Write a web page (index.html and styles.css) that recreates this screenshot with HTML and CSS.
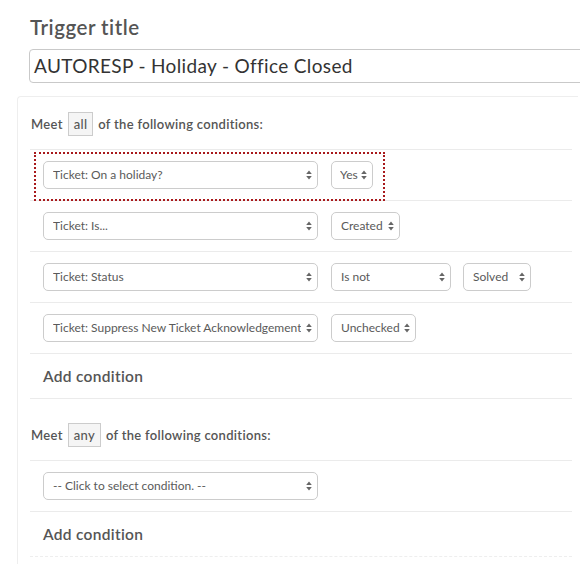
FILE: index.html
```html
<!DOCTYPE html>
<html>
<head>
<meta charset="utf-8">
<link rel="stylesheet" href="styles.css">
</head>
<body>
<div class="page">
  <h1 class="title">Trigger title</h1>
  <div class="title-input">AUTORESP - Holiday - Office Closed</div>
  <div class="panel">
    <div class="meet">Meet <span class="mode">all</span> of the following conditions:</div>
    <div class="row row-first">
      <div class="highlight"></div>
      <div class="select w-field"><span>Ticket: On a holiday?</span><svg class="arr" width="6" height="10" viewBox="0 0 6 10"><path d="M3 0.5 L5.8 4 H0.2 Z M3 9.5 L5.8 6 H0.2 Z" fill="#666"/></svg></div>
      <div class="select w-yes"><span>Yes</span><svg class="arr" width="6" height="10" viewBox="0 0 6 10"><path d="M3 0.5 L5.8 4 H0.2 Z M3 9.5 L5.8 6 H0.2 Z" fill="#666"/></svg></div>
    </div>
    <div class="row">
      <div class="select w-field"><span>Ticket: Is...</span><svg class="arr" width="6" height="10" viewBox="0 0 6 10"><path d="M3 0.5 L5.8 4 H0.2 Z M3 9.5 L5.8 6 H0.2 Z" fill="#666"/></svg></div>
      <div class="select w-created"><span>Created</span><svg class="arr" width="6" height="10" viewBox="0 0 6 10"><path d="M3 0.5 L5.8 4 H0.2 Z M3 9.5 L5.8 6 H0.2 Z" fill="#666"/></svg></div>
    </div>
    <div class="row">
      <div class="select w-field"><span>Ticket: Status</span><svg class="arr" width="6" height="10" viewBox="0 0 6 10"><path d="M3 0.5 L5.8 4 H0.2 Z M3 9.5 L5.8 6 H0.2 Z" fill="#666"/></svg></div>
      <div class="select w-isnot"><span>Is not</span><svg class="arr" width="6" height="10" viewBox="0 0 6 10"><path d="M3 0.5 L5.8 4 H0.2 Z M3 9.5 L5.8 6 H0.2 Z" fill="#666"/></svg></div>
      <div class="select w-solved"><span>Solved</span><svg class="arr" width="6" height="10" viewBox="0 0 6 10"><path d="M3 0.5 L5.8 4 H0.2 Z M3 9.5 L5.8 6 H0.2 Z" fill="#666"/></svg></div>
    </div>
    <div class="row">
      <div class="select w-field"><span>Ticket: Suppress New Ticket Acknowledgement</span><svg class="arr" width="6" height="10" viewBox="0 0 6 10"><path d="M3 0.5 L5.8 4 H0.2 Z M3 9.5 L5.8 6 H0.2 Z" fill="#666"/></svg></div>
      <div class="select w-unchecked"><span>Unchecked</span><svg class="arr" width="6" height="10" viewBox="0 0 6 10"><path d="M3 0.5 L5.8 4 H0.2 Z M3 9.5 L5.8 6 H0.2 Z" fill="#666"/></svg></div>
    </div>
    <div class="add">Add condition</div>

    <div class="meet meet-any">Meet <span class="mode">any</span> of the following conditions:</div>
    <div class="row row-first">
      <div class="select w-field"><span>-- Click to select condition. --</span><svg class="arr" width="6" height="10" viewBox="0 0 6 10"><path d="M3 0.5 L5.8 4 H0.2 Z M3 9.5 L5.8 6 H0.2 Z" fill="#666"/></svg></div>
    </div>
    <div class="add add-last">Add condition</div>
  </div>
</div>
</body>
</html>
```
FILE: styles.css
```css
* { box-sizing: border-box; }
html, body { margin: 0; padding: 0; background: #fff; }
body {
  font-family: "Lato", "Open Sans", sans-serif;
  color: #555;
  width: 580px;
  height: 564px;
  overflow: hidden;
}
.page { padding: 14px 0 0 0; }
.title {
  margin: 0 0 0 30px;
  font-size: 20.5px;
  letter-spacing: 0.5px;
  line-height: 26px;
  font-weight: 600;
  color: #555;
  height: 35px;
}
.title-input {
  margin-left: 29px;
  width: 555px;
  height: 34px;
  border: 1px solid #c9c9c9;
  border-radius: 4px;
  padding: 0 0 0 4px;
  font-size: 19px;
  letter-spacing: 0.35px;
  line-height: 31px;
  color: #333;
}
.panel {
  margin: 13px 0 0 17px;
  width: 561px;
  height: 470px;
  border-top: 1px solid #eeeeee;
  border-left: 1px solid #eeeeee;
  border-top-left-radius: 4px;
  padding: 15px 6px 0 12px;
}
.meet {
  display: flex;
  align-items: center;
  font-size: 13px;
  letter-spacing: 0.3px;
  font-weight: 600;
  color: #555;
  height: 24px;
  padding-left: 1px;
  margin-bottom: 13px;
}
.mode {
  display: inline-flex;
  align-items: center;
  height: 24px;
  padding: 0 5px;
  margin: 0 5px;
  border: 1px solid #cccccc;
  background: #f5f5f5;
  font-weight: 500;
}
.meet-any { margin-top: 24px; }
.row {
  position: relative;
  display: flex;
  gap: 13px;
  padding: 11px 0 11px 13px;
  border-bottom: 1px solid #ebebeb;
  height: 51px;
}
.row-first { border-top: 1px solid #ebebeb; height: 52px; }
.highlight {
  position: absolute;
  left: 4px;
  top: 2px;
  width: 351px;
  height: 49px;
  border: 2px dotted #a8191c;
}
.select {
  position: relative;
  display: flex;
  align-items: center;
  justify-content: space-between;
  gap: 3px;
  height: 28px;
  border: 1px solid #cccccc;
  border-radius: 5px;
  padding: 0 5px 1px 9px;
  font-size: 12px;
  color: #5a5a5a;
  background: #fff;
  white-space: nowrap;
}
.select span { overflow: hidden; }
.arr { flex: none; }
.w-field { width: 275px; }
.w-yes { width: 42px; padding-left: 8px; }
.w-created { width: 69px; }
.w-isnot { width: 120px; }
.w-solved { width: 68px; margin-left: -1px; }
.w-unchecked { width: 85px; }
.add {
  height: 45px;
  display: flex;
  align-items: center;
  padding-left: 13px;
  font-size: 15.5px;
  letter-spacing: 0.3px;
  font-weight: 600;
  color: #555;
  border-bottom: 1px solid #ebebeb;
}
.add-last { border-bottom: 1px dashed #eeeeee; }
```
